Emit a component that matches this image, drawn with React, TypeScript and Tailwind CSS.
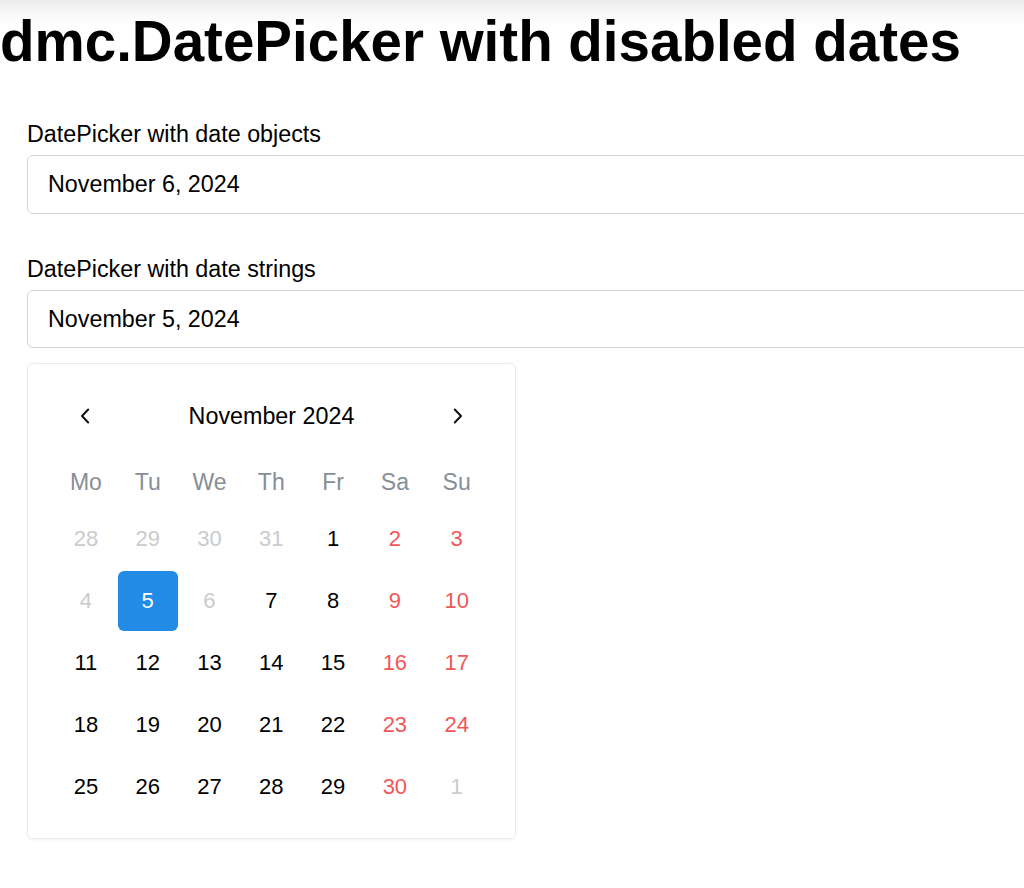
import React from 'react';

type Day = { n: number; kind: 'normal' | 'weekend' | 'muted' | 'selected' };

const weekdays = ['Mo', 'Tu', 'We', 'Th', 'Fr', 'Sa', 'Su'];

const weeks: Day[][] = [
  [
    { n: 28, kind: 'muted' },
    { n: 29, kind: 'muted' },
    { n: 30, kind: 'muted' },
    { n: 31, kind: 'muted' },
    { n: 1, kind: 'normal' },
    { n: 2, kind: 'weekend' },
    { n: 3, kind: 'weekend' },
  ],
  [
    { n: 4, kind: 'muted' },
    { n: 5, kind: 'selected' },
    { n: 6, kind: 'muted' },
    { n: 7, kind: 'normal' },
    { n: 8, kind: 'normal' },
    { n: 9, kind: 'weekend' },
    { n: 10, kind: 'weekend' },
  ],
  [11, 12, 13, 14, 15, 16, 17].map((n, i) => ({ n, kind: i > 4 ? 'weekend' : 'normal' })),
  [18, 19, 20, 21, 22, 23, 24].map((n, i) => ({ n, kind: i > 4 ? 'weekend' : 'normal' })),
  [
    { n: 25, kind: 'normal' },
    { n: 26, kind: 'normal' },
    { n: 27, kind: 'normal' },
    { n: 28, kind: 'normal' },
    { n: 29, kind: 'normal' },
    { n: 30, kind: 'weekend' },
    { n: 1, kind: 'muted' },
  ],
];

const dayClass: Record<Day['kind'], string> = {
  normal: 'text-black',
  weekend: 'text-[#f25757]',
  muted: 'text-[#c9cbcd]',
  selected: 'bg-[#228be6] text-white',
};

function Chevron({ dir }: { dir: 'left' | 'right' }) {
  return (
    <svg width="10" height="16" viewBox="0 0 10 16" fill="none">
      <path
        d={dir === 'left' ? 'M8.2 1.5 L2 8 L8.2 14.5' : 'M1.8 1.5 L8 8 L1.8 14.5'}
        stroke="#111"
        strokeWidth="2"
        strokeLinecap="round"
        strokeLinejoin="round"
      />
    </svg>
  );
}

function Field({ label, value, className }: { label: string; value: string; className?: string }) {
  return (
    <div className={className}>
      <div className="text-[23.3px] leading-[36px] text-black">{label}</div>
      <div className="mt-[3px] flex h-[58.5px] w-[1010px] items-center rounded-[6px] border border-[#ced4da] pl-[20px] pt-[1px] text-[23.3px] text-black">
        {value}
      </div>
    </div>
  );
}

export default function App() {
  return (
    <div
      className="h-[888px] w-[1024px] overflow-hidden bg-white bg-[linear-gradient(to_bottom,#ebebeb_0px,#f7f7f7_12px,#ffffff_26px)]"
      style={{ fontFamily: '"Liberation Sans", Arial, sans-serif' }}
    >
      <h1 className="whitespace-nowrap pt-[14px] text-[56.5px] font-bold leading-[56px] text-black">
        dmc.DatePicker with disabled dates
      </h1>

      <div className="pl-[27px]">
        <Field label="DatePicker with date objects" value="November 6, 2024" className="mt-[46px]" />
        <Field label="DatePicker with date strings" value="November 5, 2024" className="mt-[37px]" />

        <div className="mt-[15px] w-[489px] rounded-[6px] border border-[#e9ecef] pb-[21px] pl-[27px] pr-[26px] pt-[29px] shadow-[0_1px_3px_rgba(0,0,0,0.05)]">
          <div className="flex h-[46px] w-[433px] items-center">
            <div className="flex h-[46px] w-[60px] items-center justify-center">
              <Chevron dir="left" />
            </div>
            <div className="flex-1 text-center text-[23.3px] text-black">November 2024</div>
            <div className="flex h-[46px] w-[60px] items-center justify-center">
              <Chevron dir="right" />
            </div>
          </div>

          <div className="mt-[17px] grid h-[52px] grid-cols-[repeat(7,61.8px)] items-center">
            {weekdays.map((w) => (
              <div key={w} className="text-center text-[23px] text-[#868e96]">
                {w}
              </div>
            ))}
          </div>

          <div className="grid grid-cols-[repeat(7,61.8px)]">
            {weeks.flat().map((d, i) => (
              <div key={i} className="flex h-[61.8px] items-center justify-center">
                <div
                  className={`flex h-[60px] w-[60px] items-center justify-center rounded-[6px] text-[22px] ${dayClass[d.kind]}`}
                >
                  {d.n}
                </div>
              </div>
            ))}
          </div>
        </div>
      </div>
    </div>
  );
}
